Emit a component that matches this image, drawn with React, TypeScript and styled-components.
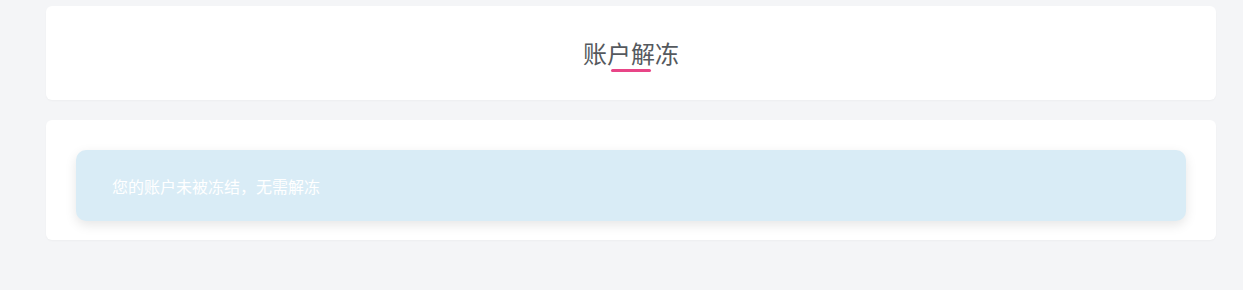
import React from 'react';
import styled, { createGlobalStyle } from 'styled-components';

const GlobalStyle = createGlobalStyle`
  html, body {
    margin: 0;
    padding: 0;
    background: #f4f5f7;
    font-family: "Noto Sans CJK SC", "Noto Sans", sans-serif;
  }
`;

const Page = styled.div`
  min-height: 290px;
  padding: 6px 27px 0 46px;
  box-sizing: border-box;
  display: flex;
  flex-direction: column;
  gap: 20px;
`;

const Card = styled.div<{ $pad?: string }>`
  background: #ffffff;
  border-radius: 6px;
  box-shadow: 0 1px 2px rgba(0, 0, 0, 0.03);
  padding: ${p => p.$pad || '0'};
`;

const HeaderCard = styled(Card)`
  height: 94px;
  display: flex;
  align-items: center;
  justify-content: center;
`;

const Title = styled.h1`
  position: relative;
  margin: 0;
  font-size: 24px;
  font-weight: 400;
  color: #55595e;
  line-height: 30px;

  &::after {
    content: '';
    position: absolute;
    left: 50%;
    bottom: -4px;
    width: 40px;
    height: 3px;
    margin-left: -20px;
    border-radius: 2px;
    background: #e84587;
  }
`;

const Alert = styled.div`
  height: 71px;
  display: flex;
  align-items: center;
  padding: 0 36px;
  border-radius: 10px;
  background: #d9ecf6;
  box-shadow: 0 4px 12px rgba(0, 0, 0, 0.1);
  color: #ffffff;
  font-size: 16px;
  font-weight: 400;
`;

export default function App() {
  return (
    <>
      <GlobalStyle />
      <Page>
        <HeaderCard>
          <Title>账户解冻</Title>
        </HeaderCard>
        <Card $pad="30px 30px 19px 30px">
          <Alert>您的账户未被冻结，无需解冻</Alert>
        </Card>
      </Page>
    </>
  );
}
